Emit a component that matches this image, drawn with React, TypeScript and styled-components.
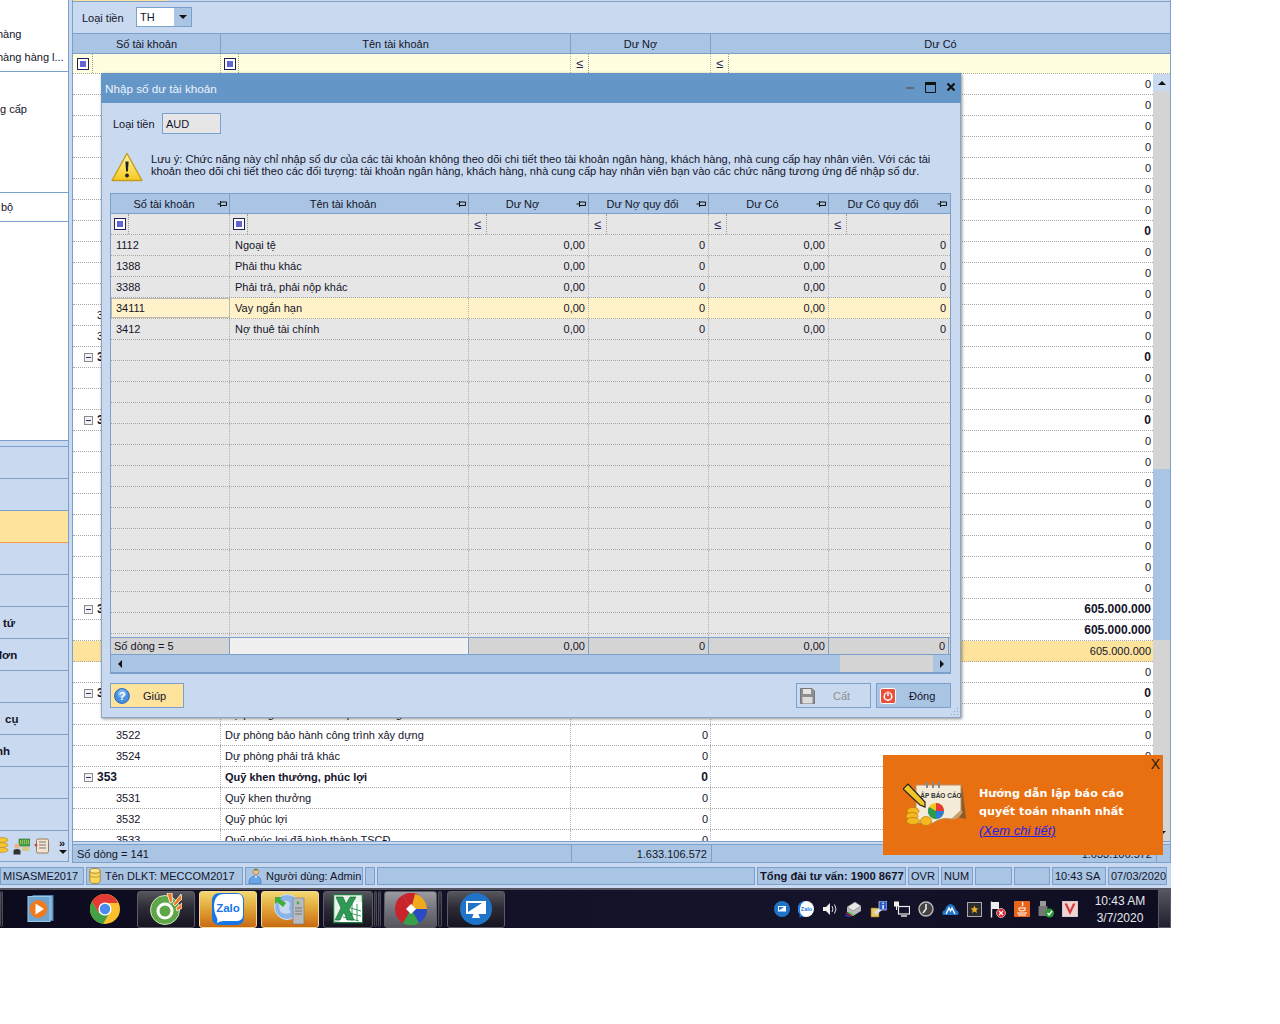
import React from 'react';
import styled, { createGlobalStyle } from 'styled-components';

const GlobalStyle = createGlobalStyle`
  html, body { margin: 0; padding: 0; background: #fff; }
  body { font-family: "Liberation Sans", Arial, sans-serif; font-size: 11px; color: #14142a; }
  * { box-sizing: border-box; }
  svg { flex: none; display: block; }
`;

const LINE = '#7ba0cc';
const BAND = '#a9c5e3';
const PANE = '#c9daf0';

const Root = styled.div`
  position: relative;
  width: 1171px;
  height: 928px;
  overflow: hidden;
  display: flex;
  flex-direction: column;
`;

const Workspace = styled.div`
  height: 866px;
  flex: none;
  display: flex;
  gap: 3px;
  background: ${PANE};
`;

/* ---------- left navigation ---------- */
const Sidebar = styled.aside`
  width: 69px;
  height: 862px;
  display: flex;
  flex-direction: column;
  border-right: 1px solid ${LINE};
  border-bottom: 1px solid ${LINE};
  overflow: hidden;
`;

const ListArea = styled.div`
  height: 441px;
  flex: none;
  background: #fff;
  display: flex;
  flex-direction: column;
  border-bottom: 1px solid ${LINE};
`;

const ListGroup = styled.div<{ $h: number; $top: number }>`
  height: ${(p) => p.$h}px;
  padding-top: ${(p) => p.$top}px;
  border-bottom: 1px solid ${LINE};
  flex: none;
`;

const ListLine = styled.div<{ $x: number }>`
  height: 23px;
  line-height: 23px;
  margin-left: ${(p) => p.$x}px;
  white-space: nowrap;
`;

const NavList = styled.div`
  margin-top: 5px;
  border-top: 1px solid ${LINE};
`;

const NavItem = styled.div<{ $active?: boolean; $x: number }>`
  height: 32px;
  line-height: 33px;
  text-indent: ${(p) => p.$x}px;
  font-size: 11.5px;
  font-weight: bold;
  white-space: nowrap;
  overflow: hidden;
  background: ${(p) => (p.$active ? '#fde39c' : PANE)};
  border-bottom: 1px solid ${(p) => (p.$active ? '#f59a3c' : LINE)};
`;

const NavTools = styled.div`
  flex: 1;
  display: flex;
  align-items: center;
  gap: 4px;
  background: ${PANE};
`;

const Chevrons = styled.div`
  margin-left: 5px;
  width: 8px;
  line-height: 10px;
  font-size: 11px;
  font-weight: bold;
  &::after {
    content: '';
    display: block;
    margin: 2px 0 0 0;
    width: 0;
    border: 4px solid transparent;
    border-top: 4px solid #111;
    border-bottom: 0;
  }
`;

/* ---------- account grid behind the dialog ---------- */
const Main = styled.main`
  width: 1099px;
  height: 863px;
  display: flex;
  flex-direction: column;
  border-left: 1px solid ${LINE};
  border-right: 1px solid ${LINE};
  border-bottom: 1px solid ${LINE};
`;

const TopEdge = styled.div`
  height: 2px;
  flex: none;
  border-bottom: 1px solid ${LINE};
  &::before {
    content: '';
    display: block;
    width: 94px;
    height: 1px;
    background: #fde39c;
  }
`;

const Filterbar = styled.div`
  height: 31px;
  flex: none;
  display: flex;
  align-items: center;
  padding: 0 0 0 9px;
`;

const FieldLabel = styled.span<{ $w: number }>`
  width: ${(p) => p.$w}px;
  flex: none;
  padding-top: 1px;
`;

const Combo = styled.div`
  width: 56px;
  height: 20px;
  display: flex;
  border: 1px solid ${LINE};
  background: #fff;
  margin-top: -1px;
`;

const ComboText = styled.span`
  flex: 1;
  padding-left: 3px;
  line-height: 18px;
`;

const ComboArrow = styled.span`
  width: 17px;
  background: ${BAND};
  display: flex;
  align-items: center;
  justify-content: center;
  &::after {
    content: '';
    border: 4px solid transparent;
    border-top: 4px solid #111;
    border-bottom: 0;
  }
`;

const HeadRow = styled.div`
  display: flex;
  flex: none;
  height: 21px;
  background: ${BAND};
  border-top: 1px solid ${LINE};
  border-bottom: 1px solid ${LINE};
`;

const HeadCell = styled.div<{ $w: number; $pin?: boolean }>`
  position: relative;
  width: ${(p) => p.$w}px;
  flex: none;
  text-align: center;
  line-height: 20px;
  padding-right: ${(p) => (p.$pin ? 12 : 0)}px;
  border-right: 1px solid ${LINE};
  white-space: nowrap;
  &:last-child { border-right: 0; }
`;

const PinSlot = styled.svg`
  position: absolute;
  right: 1px;
  top: 5px;
`;

const FilterRow = styled.div<{ $tint: string; $h: number }>`
  display: flex;
  flex: none;
  height: ${(p) => p.$h}px;
  background: ${(p) => p.$tint};
  border-bottom: 1px dotted #a8a8a8;
`;

const FilterCell = styled.div<{ $w: number }>`
  width: ${(p) => p.$w}px;
  flex: none;
  display: flex;
  border-right: 1px dotted #b4b4b4;
  &:last-child { border-right: 0; }
`;

const FilterTool = styled.div<{ $w: number }>`
  width: ${(p) => p.$w}px;
  height: 100%;
  display: flex;
  align-items: center;
  justify-content: center;
  border-right: 1px dotted #9a9a9a;
`;

const FilterBox = styled.span`
  width: 12px;
  height: 12px;
  border: 1px solid #23235a;
  background: #fff;
  padding: 2px;
  &::before {
    content: '';
    display: block;
    width: 6px;
    height: 6px;
    background: #6464d2;
  }
`;

const FilterOp = styled.span`
  color: #23235a;
  font-size: 13px;
  line-height: 15px;
`;

const BodyArea = styled.div`
  flex: 1;
  min-height: 0;
  display: flex;
  overflow: hidden;
  border-bottom: 1px solid ${LINE};
`;

const RowsPane = styled.div`
  width: 1080px;
  background: #fff;
  overflow: hidden;
`;

const DataRow = styled.div<{ $tone?: string; $bold?: boolean }>`
  display: flex;
  height: 21px;
  line-height: 20px;
  border-bottom: 1px dotted #a8a8a8;
  background: ${(p) => p.$tone || 'transparent'};
  font-weight: ${(p) => (p.$bold ? 'bold' : 'normal')};
`;

const DataCell = styled.div<{ $w: number; $right?: boolean; $left?: number; $end?: number; $big?: boolean; $current?: boolean }>`
  width: ${(p) => p.$w}px;
  flex: none;
  display: flex;
  align-items: center;
  justify-content: ${(p) => (p.$right ? 'flex-end' : 'flex-start')};
  padding: 0 ${(p) => p.$end ?? 3}px 0 ${(p) => p.$left ?? 4}px;
  font-size: ${(p) => (p.$big ? 12 : 11)}px;
  white-space: nowrap;
  overflow: hidden;
  border-right: 1px dotted #b4b4b4;
  ${(p) => (p.$current ? 'outline: 1px solid #b8b8b8; outline-offset: -1px; border-right: 0;' : '')}
  &:last-child { border-right: 0; }
`;

const Expander = styled.span`
  width: 9px;
  height: 9px;
  margin-right: 4px;
  flex: none;
  border: 1px solid #8b8b8b;
  background: #f2f2f2;
  display: flex;
  align-items: center;
  justify-content: center;
  &::before {
    content: '';
    width: 5px;
    height: 1px;
    background: #30306a;
  }
`;

const VScroll = styled.div`
  width: 17px;
  background: #d4d4d4;
  display: flex;
  flex-direction: column;
  align-items: stretch;
`;

const VArrow = styled.div<{ $down?: boolean }>`
  height: 17px;
  flex: none;
  background: ${(p) => (p.$down ? '#d4d4d4' : PANE)};
  display: flex;
  align-items: center;
  justify-content: center;
  &::after {
    content: '';
    border: 4px solid transparent;
    ${(p) => (p.$down ? 'border-top: 4px solid #111; border-bottom: 0;' : 'border-bottom: 4px solid #111; border-top: 0;')}
  }
`;

const VTrack = styled.div`
  flex: 1;
  padding-top: 378px;
`;

const VThumb = styled.div`
  height: 171px;
  background: ${BAND};
`;

const FootRow = styled.div`
  height: 18px;
  flex: none;
  margin-top: 2px;
  display: flex;
  background: ${BAND};
  border-top: 1px solid ${LINE};
`;

const FootCell = styled.div<{ $w: number; $right?: boolean }>`
  width: ${(p) => p.$w}px;
  flex: none;
  line-height: 18px;
  padding: 0 4px;
  text-align: ${(p) => (p.$right ? 'right' : 'left')};
  border-right: 1px solid ${LINE};
  white-space: nowrap;
`;

/* ---------- status bar ---------- */
const StatusBar = styled.footer`
  height: 22px;
  flex: none;
  display: flex;
  gap: 2px;
  padding: 1px 0 3px 0;
  background: ${PANE};
`;

const StatusPanel = styled.div<{ $w: number; $bold?: boolean }>`
  width: ${(p) => p.$w}px;
  flex: none;
  display: flex;
  align-items: center;
  gap: 4px;
  padding: 0 2px;
  overflow: hidden;
  white-space: nowrap;
  background: ${BAND};
  border: 1px solid ${LINE};
  font-weight: ${(p) => (p.$bold ? 'bold' : 'normal')};
  font-size: ${(p) => (p.$bold ? 11.2 : 11)}px;
`;

/* ---------- taskbar ---------- */
const Taskbar = styled.nav`
  height: 40px;
  flex: none;
  display: flex;
  align-items: center;
  background: linear-gradient(90deg, #0c0b1e 0%, #14132a 55%, #15132a 70%, #0e0d20 100%);
  border-top: 2px solid #55555f;
  color: #e8e8f0;
`;

const Sliver = styled.div<{ $w: number; $after: number }>`
  width: ${(p) => p.$w}px;
  height: 36px;
  margin-right: ${(p) => p.$after}px;
  flex: none;
  border: 1px solid #4b4b55;
  border-radius: 2px;
  background: linear-gradient(180deg, #3b3b45, #17161f);
`;

const TONES: Record<string, string> = {
  plain: 'transparent',
  dark: 'linear-gradient(180deg, #55555d 0%, #2d2c36 45%, #14131f 100%)',
  orange: 'linear-gradient(180deg, #f2d771 0%, #e2a83a 45%, #c96a14 100%)',
  light: 'linear-gradient(180deg, #9a9aa0 0%, #74747c 50%, #55555c 100%)',
};

const TaskButton = styled.div<{ $tone: string; $w: number; $after?: number }>`
  width: ${(p) => p.$w}px;
  height: 37px;
  flex: none;
  margin-right: ${(p) => p.$after ?? 4}px;
  display: flex;
  align-items: center;
  justify-content: center;
  border-radius: 3px;
  background: ${(p) => TONES[p.$tone]};
  border: 1px solid ${(p) => (p.$tone === 'plain' ? 'transparent' : p.$tone === 'orange' ? '#f3d89b' : '#5c5c66')};
`;

const Tray = styled.div`
  margin-left: auto;
  display: flex;
  align-items: center;
  gap: 6px;
`;

const TraySlot = styled.div`
  width: 18px;
  height: 18px;
  display: flex;
  align-items: center;
  justify-content: center;
`;

const Clock = styled.div`
  width: 76px;
  margin-left: -3px;
  padding-top: 2px;
  font-size: 12px;
  text-align: center;
  line-height: 17px;
  color: #e6e6ee;
`;

const ShowDesktop = styled.div`
  width: 13px;
  height: 38px;
  margin-left: -6px;
  border: 1px solid #5a5a66;
  background: linear-gradient(180deg, #55555f, #1f2030);
`;

/* ---------- dialog ---------- */
const Dialog = styled.section`
  position: absolute;
  left: 101px;
  top: 73px;
  width: 860px;
  height: 645px;
  display: flex;
  flex-direction: column;
  background: ${PANE};
  border: 1px solid #8da6c4;
  border-top: 0;
  box-shadow: 1px 1px 3px rgba(0, 0, 0, 0.45);
`;

const TitleBar = styled.header`
  height: 30px;
  flex: none;
  margin: 0 -1px;
  display: flex;
  align-items: center;
  padding: 0 4px;
  background: #6496c8;
  color: #eef4fb;
`;

const TitleText = styled.span`
  flex: 1;
  font-size: 11.7px;
`;

const WindowButtons = styled.div`
  display: flex;
  align-items: center;
  gap: 10px;
  margin: -2px 1px 0 0;
`;

const DialogBody = styled.div`
  flex: 1;
  display: flex;
  flex-direction: column;
  padding: 10px 9px 0 8px;
`;

const CurrencyRow = styled.div`
  height: 21px;
  flex: none;
  display: flex;
  align-items: center;
  padding-left: 3px;
`;

const ReadOnlyInput = styled.div`
  width: 59px;
  height: 21px;
  line-height: 20px;
  padding-left: 3px;
  background: #e6e6e6;
  border: 1px solid ${LINE};
`;

const Notice = styled.div`
  height: 30px;
  margin-top: 18px;
  flex: none;
  display: flex;
  gap: 8px;
  padding-left: 1px;
`;

const NoticeText = styled.p`
  margin: 0;
  padding-top: 1px;
  font-size: 11.05px;
  line-height: 12px;
  white-space: nowrap;
`;

const DialogGrid = styled.div`
  margin-top: 11px;
  height: 481px;
  flex: none;
  display: flex;
  flex-direction: column;
  border-left: 1px solid ${LINE};
  border-right: 1px solid ${LINE};
  border-bottom: 2px solid ${LINE};
  background: #e6e6e6;
  overflow: hidden;
`;

const GridRows = styled.div`
  flex: 1;
  min-height: 0;
  overflow: hidden;
`;

const SumRow = styled.div`
  height: 18px;
  flex: none;
  display: flex;
  line-height: 17px;
  background: #d4d4d4;
  border-top: 1px solid ${LINE};
  border-bottom: 1px solid ${LINE};
`;

const SumCell = styled.div<{ $w: number; $right?: boolean; $blank?: boolean }>`
  width: ${(p) => p.$w}px;
  flex: none;
  padding: 0 3px;
  text-align: ${(p) => (p.$right ? 'right' : 'left')};
  background: ${(p) => (p.$blank ? '#f0f0f0' : 'transparent')};
  border-right: 1px solid ${LINE};
`;

const HScroll = styled.div`
  height: 17px;
  flex: none;
  display: flex;
  background: ${BAND};
`;

const HArrow = styled.div<{ $right?: boolean }>`
  width: 17px;
  flex: none;
  display: flex;
  align-items: center;
  justify-content: center;
  &::after {
    content: '';
    border: 4px solid transparent;
    ${(p) => (p.$right ? 'border-left: 4px solid #111; border-right: 0;' : 'border-right: 4px solid #111; border-left: 0;')}
  }
`;

const HThumb = styled.div`
  flex: 1;
`;

const HTrack = styled.div`
  width: 93px;
  flex: none;
  background: #d4d4d4;
`;

const ActionRow = styled.div`
  margin-top: 9px;
  height: 25px;
  flex: none;
  display: flex;
  gap: 5px;
`;

const ActionButton = styled.button<{ $help?: boolean; $off?: boolean }>`
  width: ${(p) => (p.$help ? 74 : 75)}px;
  height: 25px;
  display: flex;
  align-items: center;
  padding: 0 3px;
  gap: ${(p) => (p.$off ? 18 : 13)}px;
  font: inherit;
  color: ${(p) => (p.$off ? '#8e8e8e' : '#14142a')};
  background: ${(p) => (p.$help ? '#fde39c' : p.$off ? PANE : BAND)};
  border: 1px solid ${LINE};
  &:first-child { margin-right: auto; }
`;

const Grip = styled.svg`
  position: absolute;
  right: 1px;
  bottom: 1px;
`;

/* ---------- promo popup ---------- */
const Promo = styled.aside`
  position: absolute;
  left: 883px;
  top: 755px;
  width: 280px;
  height: 100px;
  display: flex;
  align-items: center;
  gap: 13px;
  padding: 0 0 0 20px;
  background: #e87010;
  color: #fff;
`;

const PromoClose = styled.span`
  position: absolute;
  right: 3px;
  top: 1px;
  font-size: 14px;
  color: #2a1a08;
`;

const PromoText = styled.div`
  display: flex;
  flex-direction: column;
  margin-top: 15px;
`;

const PromoTitle = styled.strong`
  font-family: "DejaVu Sans", "Noto Sans", sans-serif;
  font-size: 11.2px;
  line-height: 18px;
  white-space: nowrap;
`;

const PromoLink = styled.a`
  font-style: italic;
  color: #2222ee;
  text-decoration: underline;
  line-height: 19px;
  font-size: 13px;
`;

/* ---------- drawings ---------- */
const Pin = () => (
  <PinSlot width="11" height="10" viewBox="0 0 11 10">
    <path d="M0.5 5H3.5M3.5 2V8M3.5 3H9.5V6.5H3.5" fill="none" stroke="#111" strokeWidth="1" />
  </PinSlot>
);

const WarningIcon = () => (
  <svg width="32" height="30" viewBox="0 0 32 30">
    <defs>
      <linearGradient id="warn" x1="0" y1="0" x2="0" y2="1">
        <stop offset="0" stopColor="#fff7a8" />
        <stop offset="1" stopColor="#f7c81e" />
      </linearGradient>
    </defs>
    <path d="M16 1.5 L31 28.5 H1 Z" fill="url(#warn)" stroke="#c79a1c" strokeWidth="1.4" strokeLinejoin="round" />
    <path d="M14.4 9.5h3.2l-.7 10h-1.8z" fill="#222" />
    <circle cx="16" cy="23.5" r="1.9" fill="#222" />
  </svg>
);

const HelpIcon = () => (
  <svg width="16" height="16" viewBox="0 0 16 16">
    <circle cx="8" cy="8" r="7.4" fill="#4a90e2" stroke="#2a66b8" />
    <circle cx="8" cy="5.6" r="4.4" fill="#8cc0f4" opacity="0.7" />
    <text x="8" y="12" textAnchor="middle" fontSize="11" fontWeight="bold" fill="#fff" fontFamily="Liberation Sans">?</text>
  </svg>
);

const SaveIcon = () => (
  <svg width="15" height="16" viewBox="0 0 15 16">
    <path d="M0.5 0.5H12L14.5 3V15.5H0.5Z" fill="#8f8f8f" stroke="#777" />
    <rect x="3" y="1" width="8" height="5" fill="#e4e4e4" />
    <rect x="2.5" y="9" width="10" height="6.5" fill="#dcdcdc" />
  </svg>
);

const CloseIcon = () => (
  <svg width="16" height="16" viewBox="0 0 16 16">
    <rect x="0.5" y="0.5" width="15" height="15" rx="2" fill="#e8503e" stroke="#fff" />
    <circle cx="8" cy="8.4" r="3.8" fill="none" stroke="#fff" strokeWidth="1.5" />
    <path d="M8 3.5V8" stroke="#e8503e" strokeWidth="3" />
    <path d="M8 3.5V8" stroke="#fff" strokeWidth="1.4" />
  </svg>
);

const Minimize = () => (
  <svg width="10" height="10" viewBox="0 0 10 10"><rect x="1" y="5" width="8" height="2" fill="#5a6a7c" /></svg>
);
const Maximize = () => (
  <svg width="11" height="11" viewBox="0 0 11 11"><path d="M0.5 0.5H10.5V10.5H0.5Z M0.5 2.5H10.5" fill="none" stroke="#111" strokeWidth="1" /><rect x="0" y="0" width="11" height="3" fill="#111" /></svg>
);
const CloseX = () => (
  <svg width="10" height="10" viewBox="0 0 10 10"><path d="M1.5 1.5L8.5 8.5M8.5 1.5L1.5 8.5" stroke="#111" strokeWidth="2.2" /></svg>
);

const Coins = () => (
  <svg width="9" height="18" viewBox="0 0 9 18">
    <ellipse cx="1" cy="3" rx="7" ry="2.5" fill="#f6c531" stroke="#b97f10" strokeWidth=".6" />
    <ellipse cx="1" cy="8" rx="7" ry="2.5" fill="#f6c531" stroke="#b97f10" strokeWidth=".6" />
    <ellipse cx="1" cy="13" rx="7" ry="2.5" fill="#f6c531" stroke="#b97f10" strokeWidth=".6" />
  </svg>
);

const ChipPerson = () => (
  <svg width="17" height="17" viewBox="0 0 17 17">
    <rect x="6" y="1" width="11" height="7" fill="#4aa048" stroke="#2c6e2c" strokeWidth=".6" />
    <path d="M7 3h9M7 5h9" stroke="#e8d858" strokeWidth="1" strokeDasharray="1 1" />
    <circle cx="4" cy="8" r="2.6" fill="#e8b488" />
    <path d="M0.5 16.5V13q0-2 3.5-2t3.5 2v3.5z" fill="#333" />
    <rect x="9" y="9" width="7" height="4" fill="#d8c880" />
  </svg>
);

const NoteScroll = () => (
  <svg width="16" height="16" viewBox="0 0 16 16">
    <rect x="2.5" y="1" width="12" height="14" rx="1.5" fill="#f0e4d0" stroke="#9a7a5a" />
    <path d="M5 4h7M5 7h7M5 10h7" stroke="#777" strokeWidth="1" />
    <circle cx="2" cy="7" r="1.5" fill="#c94a3a" />
  </svg>
);

const Cylinder = () => (
  <svg width="12" height="16" viewBox="0 0 12 17">
    <path d="M0.5 3v11c0 1.4 2.5 2.5 5.5 2.5s5.5-1.1 5.5-2.5V3z" fill="#fbd75b" stroke="#a8822a" />
    <ellipse cx="6" cy="3" rx="5.5" ry="2.5" fill="#ffe88c" stroke="#a8822a" />
    <path d="M0.5 8.5c1 1.6 10 1.6 11 0" fill="none" stroke="#a8822a" strokeWidth=".7" />
  </svg>
);

const Person = () => (
  <svg width="14" height="16" viewBox="0 0 14 17">
    <circle cx="8" cy="4" r="3" fill="#f0c08a" stroke="#8a5a20" strokeWidth=".5" />
    <path d="M8 1l-2 1.5h4z" fill="#333" />
    <path d="M0.5 16.5c0-5 2.5-8 7-8s6 3 6 8z" fill="#6aa4e8" stroke="#2e68b4" strokeWidth=".6" />
    <path d="M7 8.5l1 3 1-3z" fill="#fff" />
  </svg>
);

const PlayerIcon = () => (
  <svg width="27" height="28" viewBox="0 0 27 28">
    <rect x="6" y="0.5" width="20" height="25" fill="#7ab0d8" stroke="#4a80a8" />
    <rect x="1" y="1.5" width="22" height="25" fill="#6ea4d0" stroke="#9cc8e8" />
    <circle cx="11.5" cy="14" r="9" fill="#ee7a20" />
    <path d="M8.5 8.5 L17 14 L8.5 19.5Z" fill="#fff" />
  </svg>
);

const ChromeIcon = () => (
  <svg width="30" height="30" viewBox="0 0 30 30">
    <circle cx="15" cy="15" r="15" fill="#fbc02d" />
    <path d="M15 0A15 15 0 0 0 2 7.5L8.5 18.8 15 9H28A15 15 0 0 0 15 0Z" fill="#e53935" />
    <path d="M2 7.5A15 15 0 0 0 13 29.9L19.5 18.8 8.5 18.8Z" fill="#43a047" />
    <circle cx="15" cy="15" r="6.6" fill="#fff" />
    <circle cx="15" cy="15" r="5.2" fill="#4a8bf0" />
  </svg>
);

const CocCocIcon = () => (
  <svg width="32" height="32" viewBox="0 0 32 32">
    <circle cx="15" cy="17" r="14.5" fill="#5fa648" stroke="#cfe6c0" />
    <circle cx="15" cy="18" r="7" fill="none" stroke="#fff" strokeWidth="3" />
    <path d="M17 0L20 10 22.5 9 22 0zM31 1L23 11 25 13 32 6zM32 10L26 15 27 18 32 15z" fill="#ef7a22" stroke="#fff" strokeWidth=".8" />
  </svg>
);

const ZaloIcon = () => (
  <svg width="32" height="32" viewBox="0 0 32 32">
    <path d="M8 0H24Q32 0 32 8V24Q32 32 24 32H8Q0 32 0 24V8Q0 0 8 0Z" fill="#1676e8" />
    <path d="M12 1H26Q31 1 31 8V22Q31 28 24 28H12Q8 28 5 30 6 27 5 25 2 20 2 14 2 1 12 1Z" fill="#fff" />
    <text x="16" y="19" textAnchor="middle" fontSize="11.5" fontWeight="bold" fill="#1676e8" fontFamily="Liberation Sans">Zalo</text>
  </svg>
);

const ServerIcon = () => (
  <svg width="32" height="32" viewBox="0 0 32 32">
    <circle cx="13" cy="14" r="12.5" fill="#8ab4ea" stroke="#d4e4f8" />
    <path d="M4 8c5 2 8-2 11 1s-2 6 1 9-8 4-10 0" fill="#c8d8ee" />
    <path d="M1 4h7l-2 2 6 4-3 4-6-5-2 2z" fill="#3fae3a" />
    <rect x="19" y="5" width="11" height="26" fill="#b8bcc0" stroke="#777" strokeWidth=".6" />
    <circle cx="24" cy="10" r="1.4" fill="#3fae3a" />
    <path d="M21 15h7M21 18h7M21 21h7" stroke="#777" strokeWidth="1" />
  </svg>
);

const ExcelIcon = () => (
  <svg width="30" height="30" viewBox="0 0 30 30">
    <rect x="0.5" y="0.5" width="29" height="28" fill="#e8f4e8" stroke="#1e7a40" strokeWidth="1.5" />
    <path d="M14 8H29V28H6Z" fill="#fff" />
    <path d="M14 13l14 4M12 18l16 4M10 23l16 4M19 9V27M24 10V27" stroke="#3a9a5a" strokeWidth="1" />
    <path d="M3 3H10L13 10 17 3H23L16 15 21 26H14L11 18 7 26H2L8 14Z" fill="#2e9a54" stroke="#155c30" strokeWidth=".6" />
  </svg>
);

const PinwheelIcon = () => (
  <svg width="32" height="32" viewBox="0 0 32 32">
    <path d="M16 16L8 2A16 16 0 0 0 0 16Z" fill="#c8242c" />
    <path d="M16 16L8 2A16 16 0 0 1 24 2Z" fill="#c8242c" />
    <path d="M16 16L20 1A16 16 0 0 1 32 16Z" fill="#f0a81c" />
    <path d="M16 16H32A16 16 0 0 1 24 30Z" fill="#2a4ac4" />
    <path d="M16 16L24 30A16 16 0 0 1 8 30Z" fill="#38a048" />
    <path d="M16 16L8 30A16 16 0 0 1 0 16Z" fill="#c8242c" />
    <path d="M16 11L21 16 16 21 11 16Z" fill="#fff" />
  </svg>
);

const RemoteIcon = () => (
  <svg width="32" height="32" viewBox="0 0 32 32">
    <circle cx="16" cy="16" r="16" fill="#1f74c8" />
    <rect x="6" y="8" width="20" height="13" fill="#fff" />
    <path d="M8 19V10H22Z" fill="#1f74c8" />
    <path d="M12 25h8l-1.5-4h-5z" fill="#fff" />
  </svg>
);

const TrayIcons = [
  <svg key="a" width="16" height="16" viewBox="0 0 16 16"><circle cx="8" cy="8" r="8" fill="#1f74c8" /><rect x="4" y="5" width="8" height="5.5" fill="#fff" /><path d="M5 9.5V6h5z" fill="#1f74c8" /></svg>,
  <svg key="b" width="16" height="16" viewBox="0 0 16 16"><circle cx="8" cy="8" r="8" fill="#fff" /><path d="M8 0Q0 0 0 8 0 12 2 14L1 16Q4 16 5 15 1 12 2 7 3 1 8 0Z" fill="#1676e8" /><text x="8.5" y="10" textAnchor="middle" fontSize="5.5" fontWeight="bold" fill="#1676e8" fontFamily="Liberation Sans">Zalo</text></svg>,
  <svg key="c" width="16" height="16" viewBox="0 0 16 16"><path d="M1 6H4L8 2V14L4 10H1Z" fill="#eee" /><path d="M10 5Q12 8 10 11M12.5 3.5Q15.5 8 12.5 12.5" fill="none" stroke="#ddd" /></svg>,
  <svg key="d" width="18" height="16" viewBox="0 0 18 16"><path d="M2 6L10 1 16 5 8 10Z" fill="#e8e8e8" stroke="#777" strokeWidth=".5" /><path d="M2 6V11L8 15 16 10V5L8 10Z" fill="#bbb" /><path d="M1 12L7 15" stroke="#e33" /><path d="M0 14L5 16" stroke="#33c" strokeWidth="1.4" /><path d="M3 11L9 14" stroke="#3c3" /></svg>,
  <svg key="e" width="17" height="17" viewBox="0 0 17 17"><path d="M1 7H7L9 9V16H1Z" fill="#e8c860" stroke="#8a7020" strokeWidth=".6" /><path d="M4 11L10 6 12 9 6 14Z" fill="#ddd" /><rect x="9" y="0" width="8" height="9" rx="1" fill="#2a5ac8" stroke="#fff" strokeWidth=".6" /><rect x="12.4" y="4" width="1.4" height="4" fill="#fff" /><rect x="12.4" y="1.6" width="1.4" height="1.4" fill="#fff" /></svg>,
  <svg key="f" width="16" height="16" viewBox="0 0 16 16"><rect x="4.5" y="5.5" width="11" height="7.5" fill="none" stroke="#eee" strokeWidth="1.2" /><path d="M7 15H13" stroke="#eee" strokeWidth="1.4" /><rect x="0" y="0.5" width="5" height="5" fill="#eee" /><path d="M2.5 5V9" stroke="#eee" /></svg>,
  <svg key="g" width="16" height="16" viewBox="0 0 16 16"><circle cx="8" cy="8" r="7" fill="#444" stroke="#bbb" strokeWidth="1.4" /><path d="M8 3V8L5 12" fill="none" stroke="#eee" strokeWidth="1.6" /></svg>,
  <svg key="h" width="17" height="12" viewBox="0 0 17 12"><path d="M1 12Q-1 8 3 7 4 2 8.5 1 13 2 14 7 18 8 16 12Z" fill="#1f74c8" /><path d="M4 11L7 5 8.5 8 10 5 13 11" fill="none" stroke="#fff" strokeWidth="1.4" /></svg>,
  <svg key="i" width="15" height="15" viewBox="0 0 15 15"><rect x="0.5" y="0.5" width="14" height="14" fill="#2c2c30" stroke="#aaa" /><path d="M7.5 3.5L8.7 6.3 11.5 6.5 9.3 8.3 10 11 7.5 9.6 5 11 5.7 8.3 3.5 6.5 6.3 6.3Z" fill="#e8b020" /></svg>,
  <svg key="j" width="16" height="17" viewBox="0 0 16 17"><path d="M1.5 0.5V16.5" stroke="#eee" strokeWidth="1.4" /><path d="M2 1H9V8H2Z" fill="#eee" /><circle cx="11" cy="12" r="4.5" fill="#d8262c" stroke="#fff" strokeWidth=".6" /><path d="M9 10L13 14M13 10L9 14" stroke="#fff" strokeWidth="1.3" /></svg>,
  <svg key="k" width="16" height="16" viewBox="0 0 16 16"><rect width="16" height="16" rx="1" fill="#e8641c" /><path d="M3 12H13M4 14H12M5 9Q8 11 11 9L11 7H5Z" fill="none" stroke="#fff" strokeWidth="1.1" /><path d="M8 1Q10 3 8 5" fill="none" stroke="#fff" strokeWidth="1.1" /></svg>,
  <svg key="l" width="16" height="17" viewBox="0 0 16 17"><rect x="2" y="0" width="6" height="6" fill="#999" /><rect x="0.5" y="5" width="9" height="10" rx="1" fill="#777" /><circle cx="11.5" cy="12" r="4.5" fill="#2c9a34" /><path d="M9.5 12L11 14 14 10" fill="none" stroke="#fff" strokeWidth="1.3" /></svg>,
  <svg key="m" width="16" height="16" viewBox="0 0 16 16"><rect width="16" height="16" fill="#f0d4d4" stroke="#bbb" /><path d="M2.5 2.5L8 14 13.5 2.5H11L8 9 5 2.5Z" fill="#d63a3a" /></svg>,
];

const PromoArt = () => (
  <svg width="63" height="46" viewBox="0 0 63 46">
    <path d="M59 3L63 37 50 34Z" fill="#8a5a2a" />
    <path d="M13 3H58V29Q58 37 48 37 38 35 30 41H13Z" fill="#f4ecd8" stroke="#b89060" />
    <path d="M48 37Q54 39 60 30L58 28Z" fill="#c8a070" />
    <path d="M24 0v6M30 0v6M36 0v6" stroke="#888" strokeWidth="2" />
    <text x="36" y="16" textAnchor="middle" fontSize="6.5" fontWeight="bold" fill="#333" fontFamily="Liberation Sans">LẬP BÁO CÁO</text>
    <circle cx="33" cy="29" r="8" fill="#f5c518" />
    <path d="M33 29V21A8 8 0 0 1 41 29Z" fill="#e53935" />
    <path d="M33 29H41A8 8 0 0 1 33 37Z" fill="#2e7bd6" />
    <path d="M33 29V37A8 8 0 0 1 26 25Z" fill="#2a9a50" />
    <path d="M0 7L5 2 22 20 22 25 17 23Z" fill="#f3c628" stroke="#222" strokeWidth="1.2" />
    <g fill="#f5b81f" stroke="#b57a10" strokeWidth=".7">
      <ellipse cx="10" cy="29" rx="6" ry="3.5" />
      <ellipse cx="9" cy="34" rx="6" ry="3.5" />
      <ellipse cx="10" cy="39" rx="6.5" ry="3.5" />
      <ellipse cx="23" cy="39" rx="5.5" ry="4.5" />
    </g>
  </svg>
);

/* ---------- data ---------- */
const MAIN_COLS = [148, 350, 140, 442];
const MAIN_HEAD = [148, 350, 140, 459];

type Account = {
  code?: string;
  name?: string;
  debit?: string;
  credit: string;
  level?: 'box' | 'plain' | 'child';
  bold?: boolean;
  picked?: boolean;
};

const zero = (n: number): Account[] => Array.from({ length: n }, () => ({ credit: '0' }));

const accounts: Account[] = [
  ...zero(7),
  { credit: '0', bold: true },
  ...zero(3),
  { code: '3', credit: '0', level: 'plain' },
  { code: '3', credit: '0', level: 'plain' },
  { code: '3', credit: '0', level: 'box', bold: true },
  ...zero(2),
  { code: '3', credit: '0', level: 'box', bold: true },
  ...zero(8),
  { code: '3', credit: '605.000.000', level: 'box', bold: true },
  { credit: '605.000.000', bold: true },
  { credit: '605.000.000', picked: true },
  { credit: '0' },
  { code: '3', credit: '0', level: 'box', bold: true },
  { code: '3521', name: 'Dự phòng bảo hành sản phẩm hàng hóa', credit: '0', level: 'child' },
  { code: '3522', name: 'Dự phòng bảo hành công trình xây dựng', debit: '0', credit: '0', level: 'child' },
  { code: '3524', name: 'Dự phòng phải trả khác', debit: '0', credit: '0', level: 'child' },
  { code: '353', name: 'Quỹ khen thưởng, phúc lợi', debit: '0', credit: '0', level: 'box', bold: true },
  { code: '3531', name: 'Quỹ khen thưởng', debit: '0', credit: '0', level: 'child' },
  { code: '3532', name: 'Quỹ phúc lợi', debit: '0', credit: '0', level: 'child' },
  { code: '3533', name: 'Quỹ phúc lợi đã hình thành TSCĐ', debit: '0', credit: '0', level: 'child' },
];

const CODE_INDENT = { box: 11, plain: 24, child: 43 };

const DIALOG_COLS = [119, 239, 120, 120, 120, 120];
const DIALOG_HEAD = ['Số tài khoản', 'Tên tài khoản', 'Dư Nợ', 'Dư Nợ quy đổi', 'Dư Có', 'Dư Có quy đổi'];

const balances = [
  ['1112', 'Ngoại tệ'],
  ['1388', 'Phải thu khác'],
  ['3388', 'Phải trả, phải nộp khác'],
  ['34111', 'Vay ngắn hạn'],
  ['3412', 'Nợ thuê tài chính'],
];

const NAV = [
  { label: '', x: 0 },
  { label: '', x: 0 },
  { label: '', x: 0, active: true },
  { label: '', x: 0 },
  { label: '', x: 0 },
  { label: 'tứ', x: 3 },
  { label: 'đơn', x: -5 },
  { label: '', x: 0 },
  { label: 'cụ', x: 5 },
  { label: 'nh', x: -4 },
  { label: '', x: 0 },
  { label: '', x: 0 },
];

const App: React.FC = () => {
  return (
    <Root>
      <GlobalStyle />
      <Workspace>
        <Sidebar>
          <ListArea>
            <ListGroup $h={72} $top={23}>
              <ListLine $x={-3}>hàng</ListLine>
              <ListLine $x={-3}>hàng hàng l...</ListLine>
            </ListGroup>
            <ListGroup $h={121} $top={26}>
              <ListLine $x={0}>g cấp</ListLine>
            </ListGroup>
            <ListGroup $h={29} $top={3}>
              <ListLine $x={1}>bộ</ListLine>
            </ListGroup>
          </ListArea>
          <NavList>
            {NAV.map((item, i) => (
              <NavItem key={i} $active={item.active} $x={item.x}>{item.label}</NavItem>
            ))}
          </NavList>
          <NavTools>
            <Coins />
            <ChipPerson />
            <NoteScroll />
            <Chevrons>»</Chevrons>
          </NavTools>
        </Sidebar>

        <Main>
          <TopEdge />
          <Filterbar>
            <FieldLabel $w={54}>Loại tiền</FieldLabel>
            <Combo>
              <ComboText>TH</ComboText>
              <ComboArrow />
            </Combo>
          </Filterbar>
          <HeadRow>
            {['Số tài khoản', 'Tên tài khoản', 'Dư Nợ', 'Dư Có'].map((h, i) => (
              <HeadCell key={h} $w={MAIN_HEAD[i]}>{h}</HeadCell>
            ))}
          </HeadRow>
          <FilterRow $tint="#ffffe0" $h={20}>
            <FilterCell $w={148}><FilterTool $w={20}><FilterBox /></FilterTool></FilterCell>
            <FilterCell $w={350}><FilterTool $w={18}><FilterBox /></FilterTool></FilterCell>
            <FilterCell $w={140}><FilterTool $w={18}><FilterOp>≤</FilterOp></FilterTool></FilterCell>
            <FilterCell $w={459}><FilterTool $w={18}><FilterOp>≤</FilterOp></FilterTool></FilterCell>
          </FilterRow>
          <BodyArea>
            <RowsPane>
              {accounts.map((a, i) => (
                <DataRow key={i} $bold={a.bold} $tone={a.picked ? '#fde39c' : undefined}>
                  <DataCell $w={MAIN_COLS[0]} $big={a.bold} $left={a.level ? CODE_INDENT[a.level] : 4}>
                    {a.level === 'box' && <Expander />}
                    {a.code}
                  </DataCell>
                  <DataCell $w={MAIN_COLS[1]}>{a.name}</DataCell>
                  <DataCell $w={MAIN_COLS[2]} $right $end={2} $big={a.bold}>{a.debit}</DataCell>
                  <DataCell $w={MAIN_COLS[3]} $right $end={2} $big={a.bold}>{a.credit}</DataCell>
                </DataRow>
              ))}
            </RowsPane>
            <VScroll>
              <VArrow />
              <VTrack><VThumb /></VTrack>
              <VArrow $down />
            </VScroll>
          </BodyArea>
          <FootRow>
            <FootCell $w={499}>Số dòng = 141</FootCell>
            <FootCell $w={140} $right>1.633.106.572</FootCell>
            <FootCell $w={445} $right>1.633.106.572</FootCell>
          </FootRow>
        </Main>
      </Workspace>

      <StatusBar>
        <StatusPanel $w={84}>MISASME2017</StatusPanel>
        <StatusPanel $w={157}><Cylinder />Tên DLKT: MECCOM2017</StatusPanel>
        <StatusPanel $w={118}><Person />Người dùng: Admin</StatusPanel>
        <StatusPanel $w={10} />
        <StatusPanel $w={378} />
        <StatusPanel $w={149} $bold>Tổng đài tư vấn: 1900 8677</StatusPanel>
        <StatusPanel $w={31}>OVR</StatusPanel>
        <StatusPanel $w={32}>NUM</StatusPanel>
        <StatusPanel $w={37} />
        <StatusPanel $w={36} />
        <StatusPanel $w={54}>10:43 SA</StatusPanel>
        <StatusPanel $w={59}>07/03/2020</StatusPanel>
      </StatusBar>

      <Taskbar>
        <Sliver $w={3} $after={24} />
        <TaskButton $tone="plain" $w={27} $after={35}><PlayerIcon /></TaskButton>
        <TaskButton $tone="plain" $w={32} $after={16}><ChromeIcon /></TaskButton>
        <TaskButton $tone="dark" $w={58}><CocCocIcon /></TaskButton>
        <TaskButton $tone="orange" $w={58}><ZaloIcon /></TaskButton>
        <TaskButton $tone="orange" $w={58}><ServerIcon /></TaskButton>
        <TaskButton $tone="dark" $w={50} $after={1}><ExcelIcon /></TaskButton>
        <Sliver $w={3} $after={1} />
        <Sliver $w={3} $after={3} />
        <TaskButton $tone="light" $w={53} $after={1}><PinwheelIcon /></TaskButton>
        <Sliver $w={4} $after={5} />
        <TaskButton $tone="dark" $w={58} $after={0}><RemoteIcon /></TaskButton>
        <Tray>
          {TrayIcons.map((icon, i) => <TraySlot key={i}>{icon}</TraySlot>)}
          <Clock>10:43 AM<br />3/7/2020</Clock>
          <ShowDesktop />
        </Tray>
      </Taskbar>

      <Dialog>
        <TitleBar>
          <TitleText>Nhập số dư tài khoản</TitleText>
          <WindowButtons>
            <Minimize />
            <Maximize />
            <CloseX />
          </WindowButtons>
        </TitleBar>
        <DialogBody>
          <CurrencyRow>
            <FieldLabel $w={49}>Loại tiền</FieldLabel>
            <ReadOnlyInput>AUD</ReadOnlyInput>
          </CurrencyRow>
          <Notice>
            <WarningIcon />
            <NoticeText>
              Lưu ý: Chức năng này chỉ nhập số dư của các tài khoản không theo dõi chi tiết theo tài khoản ngân hàng, khách hàng, nhà cung cấp hay nhân viên. Với các tài
              <br />
              khoản theo dõi chi tiết theo các đối tượng: tài khoản ngân hàng, khách hàng, nhà cung cấp hay nhân viên bạn vào các chức năng tương ứng để nhập số dư.
            </NoticeText>
          </Notice>
          <DialogGrid>
            <HeadRow>
              {DIALOG_HEAD.map((h, i) => (
                <HeadCell key={h} $w={DIALOG_COLS[i]} $pin>{h}<Pin /></HeadCell>
              ))}
            </HeadRow>
            <FilterRow $tint="#e6e6e6" $h={21}>
              <FilterCell $w={119}><FilterTool $w={18}><FilterBox /></FilterTool></FilterCell>
              <FilterCell $w={239}><FilterTool $w={18}><FilterBox /></FilterTool></FilterCell>
              {[0, 1, 2, 3].map((i) => (
                <FilterCell key={i} $w={120}><FilterTool $w={18}><FilterOp>≤</FilterOp></FilterTool></FilterCell>
              ))}
            </FilterRow>
            <GridRows>
              {Array.from({ length: 20 }, (_, i) => {
                const row = balances[i];
                const picked = i === 3;
                return (
                  <DataRow key={i} $tone={picked ? '#fff2c8' : undefined}>
                    <DataCell $w={DIALOG_COLS[0]} $left={5} $current={picked}>{row?.[0]}</DataCell>
                    <DataCell $w={DIALOG_COLS[1]} $left={5}>{row?.[1]}</DataCell>
                    <DataCell $w={DIALOG_COLS[2]} $right>{row && '0,00'}</DataCell>
                    <DataCell $w={DIALOG_COLS[3]} $right>{row && '0'}</DataCell>
                    <DataCell $w={DIALOG_COLS[4]} $right>{row && '0,00'}</DataCell>
                    <DataCell $w={DIALOG_COLS[5]} $right>{row && '0'}</DataCell>
                  </DataRow>
                );
              })}
            </GridRows>
            <SumRow>
              <SumCell $w={119}>Số dòng = 5</SumCell>
              <SumCell $w={239} $blank />
              <SumCell $w={120} $right>0,00</SumCell>
              <SumCell $w={120} $right>0</SumCell>
              <SumCell $w={120} $right>0,00</SumCell>
              <SumCell $w={120} $right>0</SumCell>
            </SumRow>
            <HScroll>
              <HArrow />
              <HThumb />
              <HTrack />
              <HArrow $right />
            </HScroll>
          </DialogGrid>
          <ActionRow>
            <ActionButton $help><HelpIcon />Giúp</ActionButton>
            <ActionButton $off><SaveIcon />Cất</ActionButton>
            <ActionButton><CloseIcon />Đóng</ActionButton>
          </ActionRow>
        </DialogBody>
        <Grip width="9" height="9" viewBox="0 0 9 9">
          <path d="M7 1h1v1H7zM4 4h1v1H4zM7 4h1v1H7zM1 7h1v1H1zM4 7h1v1H4zM7 7h1v1H7z" fill="#8da6c4" />
        </Grip>
      </Dialog>

      <Promo>
        <PromoClose>X</PromoClose>
        <PromoArt />
        <PromoText>
          <PromoTitle>Hướng dẫn lập báo cáo</PromoTitle>
          <PromoTitle>quyết toán nhanh nhất</PromoTitle>
          <PromoLink>(Xem chi tiết)</PromoLink>
        </PromoText>
      </Promo>
    </Root>
  );
};

export default App;
